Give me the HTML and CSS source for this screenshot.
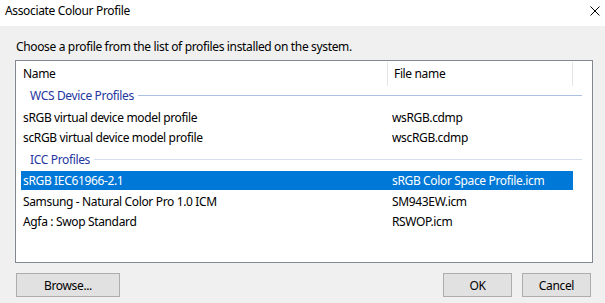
FILE: index.html
```html
<!DOCTYPE html>
<html>
<head>
<meta charset="utf-8">
<link rel="stylesheet" href="styles.css">
</head>
<body>
<div class="dialog">
  <div class="titlebar">
    <span class="title">Associate Colour Profile</span>
    <svg class="close" width="10" height="10" viewBox="0 0 10 10"><path d="M0.5 0.5 L9.5 9.5 M9.5 0.5 L0.5 9.5" stroke="#000" stroke-width="1" fill="none"/></svg>
  </div>
  <div class="content">
    <p class="prompt">Choose a profile from the list of profiles installed on the system.</p>
    <div class="list">
      <div class="header">
        <div class="hcol hname">Name</div>
        <div class="hcol hfile">File name</div>
      </div>
      <div class="group"><span class="gtext">WCS Device Profiles</span><span class="rule"></span></div>
      <div class="row"><span class="c1">sRGB virtual device model profile</span><span class="c2">wsRGB.cdmp</span></div>
      <div class="row"><span class="c1">scRGB virtual device model profile</span><span class="c2">wscRGB.cdmp</span></div>
      <div class="group second"><span class="gtext">ICC Profiles</span><span class="rule light"></span></div>
      <div class="row selected"><span class="c1">sRGB IEC61966-2.1</span><span class="c2">sRGB Color Space Profile.icm</span></div>
      <div class="row"><span class="c1">Samsung - Natural Color Pro 1.0 ICM</span><span class="c2">SM943EW.icm</span></div>
      <div class="row"><span class="c1">Agfa : Swop Standard</span><span class="c2">RSWOP.icm</span></div>
    </div>
    <div class="buttons">
      <button class="btn browse">Browse...</button>
      <span class="spacer"></span>
      <button class="btn ok">OK</button>
      <button class="btn cancel">Cancel</button>
    </div>
  </div>
</div>
</body>
</html>
```
FILE: styles.css
```css
html, body {
  margin: 0;
  padding: 0;
}
body {
  width: 605px;
  height: 303px;
  overflow: hidden;
  background: #f0f0f0;
  font-family: "Noto Sans", "Open Sans", sans-serif;
  font-size: 12px;
  letter-spacing: -0.35px;
  color: #000;
}
.dialog {
  width: 605px;
  height: 303px;
  display: flex;
  flex-direction: column;
}
.titlebar {
  height: 26px;
  background: #fff;
  display: flex;
  align-items: center;
  padding-left: 5px;
  padding-right: 5px;
  box-sizing: border-box;
}
.title {
  flex: 1;
  line-height: 16px;
  margin-top: -4px;
}
.close {
  display: block;
  margin-top: -4px;
}
.content {
  padding: 0 13px 0 15px;
  display: flex;
  flex-direction: column;
}
.prompt {
  margin: 12px 0 0 1px;
  height: 22px;
  line-height: 18px;
}
.list {
  width: 578px;
  height: 203px;
  box-sizing: border-box;
  border: 1px solid #828790;
  background: #fff;
  display: flex;
  flex-direction: column;
}
.header {
  display: flex;
  height: 25px;
  flex: none;
}
.hcol {
  box-sizing: border-box;
  line-height: 24px;
  border-right: 1px solid #e5e5e5;
  margin-top: 1px;
  height: 24px;
}
.hname {
  width: 372px;
  padding-left: 7px;
}
.hfile {
  width: 185px;
  padding-left: 6px;
}
.group {
  display: flex;
  align-items: center;
  height: 21px;
  padding-left: 14px;
  padding-right: 10px;
  flex: none;
}
.group.second {
  height: 24px;
}
.gtext {
  color: #2436a0;
  line-height: 16px;
  margin-top: -1px;
}
.second .gtext {
  margin-top: 2px;
}
.rule {
  flex: 1;
  height: 1px;
  background: #adc0e4;
  margin-left: 4px;
  margin-top: -2px;
}
.rule.light {
  background: #d5deef;
  margin-top: 0;
}
.row {
  display: flex;
  align-items: center;
  height: 20px;
  margin-left: 5px;
  width: 552px;
  flex: none;
}
.row.selected {
  background: #0078d7;
  color: #fff;
  height: 19px;
  margin-bottom: 1px;
}
.c1 {
  width: 371px;
  padding-left: 2px;
  box-sizing: border-box;
}
.c2 {
  flex: 1;
}
.buttons {
  display: flex;
  margin-top: 10px;
  padding-left: 1px;
  padding-right: 1px;
}
.spacer {
  flex: 1;
}
.btn {
  font-family: inherit;
  font-size: 12px;
  letter-spacing: -0.35px;
  color: #000;
  background: #e1e1e1;
  border: 1px solid #adadad;
  height: 24px;
  padding: 0;
  margin: 0;
  box-sizing: border-box;
}
.browse {
  width: 104px;
}
.ok {
  width: 69px;
  margin-right: 10px;
}
.cancel {
  width: 69px;
}
```
